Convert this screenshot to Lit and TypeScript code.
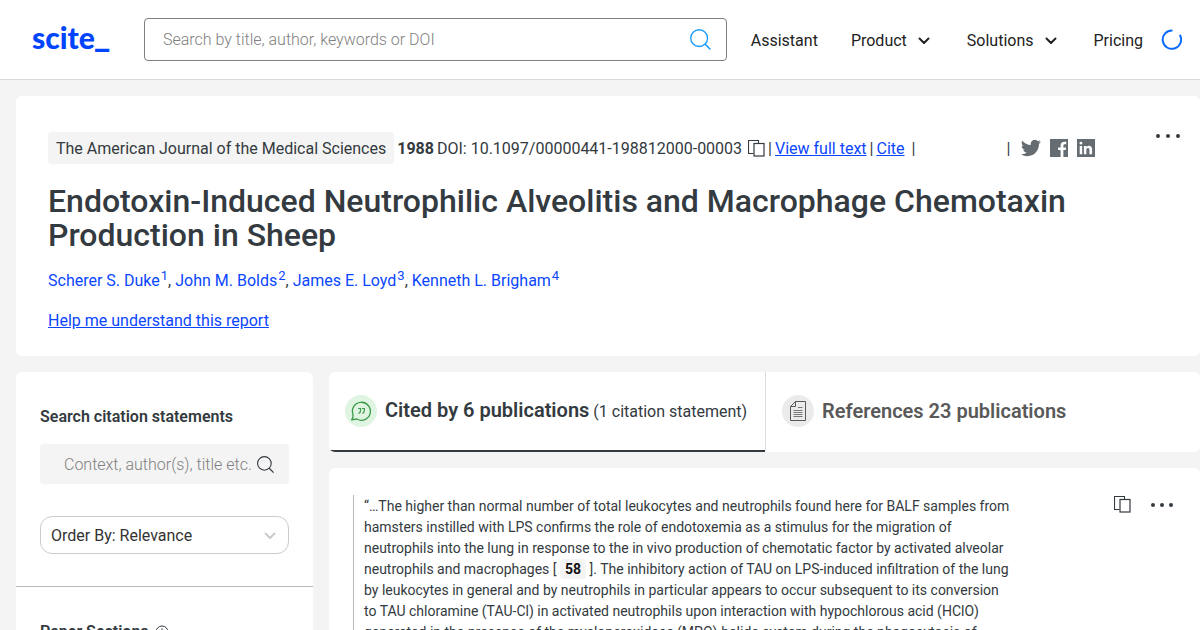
import { LitElement, html, css, svg } from "lit";
import { customElement } from "lit/decorators.js";

const chevron = html`<svg class="chevron" viewBox="0 0 14 10" width="14" height="10" aria-hidden="true">
  <path d="M2.500 2.500l4.500 4.500 4.500-4.500" fill="none" stroke="currentColor" stroke-width="2" stroke-linecap="round" stroke-linejoin="round" />
</svg>`;

const magnifier = html`<svg class="magnifier" viewBox="0 0 20 20" aria-hidden="true">
  <circle cx="8.7" cy="8.7" r="8" fill="none" stroke="currentColor" stroke-width="1.3" />
  <path d="M14.4 14.4l5.1 5.1" fill="none" stroke="currentColor" stroke-width="1.4" />
</svg>`;

const copyIcon = html`<svg viewBox="0 0 17 17" width="17" height="17" aria-hidden="true">
  <path d="M5.5 13.500h-5V.5h10v3" fill="none" stroke="currentColor" stroke-width="1.1" />
  <rect x="6" y="3.500" width="10" height="12.500" fill="none" stroke="currentColor" stroke-width="1.2" />
</svg>`;

const dots = (w: number, r: number) => html`<svg viewBox="0 0 ${w} 6" width=${w} height="6" fill="currentColor" aria-hidden="true">
  ${[r, w / 2, w - r].map((x) => svg`<circle cx=${x} cy="3" r=${r} />`)}
</svg>`;

const authors = [
  ["Scherer S. Duke", "1"],
  ["John M. Bolds", "2"],
  ["James E. Loyd", "3"],
  ["Kenneth L. Brigham", "4"],
];

@customElement("site-header")
export class SiteHeader extends LitElement {
  static styles = css`
    :host {
      display: block;
      background: #fff;
      border-bottom: 1px solid #d8d8d8;
    }
    .bar {
      display: flex;
      align-items: center;
      height: 79px;
      padding: 0 17px 0 32px;
      color: #222;
    }
    .logo {
      width: 112px;
      flex: none;
      margin-bottom: 4px;
      font: 900 30px/36px Lato, sans-serif;
      color: #0044ff;
      text-decoration: none;
    }
    .logo span {
      font: 700 32px/36px Roboto, sans-serif;
    }
    .search {
      position: relative;
      flex: 1;
      display: flex;
    }
    .search input {
      box-sizing: border-box;
      width: 100%;
      height: 43px;
      padding: 0 56px 0 18px;
      border: 1px solid #808080;
      border-radius: 4px;
      font: 300 16px Roboto, sans-serif;
      color: #222;
    }
    .search input::placeholder {
      color: #808080;
      opacity: 1;
    }
    .search button {
      position: absolute;
      right: 16px;
      top: 11px;
      padding: 0;
      border: 0;
      background: none;
      color: #1c9cff;
      display: flex;
    }
    .magnifier {
      width: 21px;
      height: 21px;
    }
    nav {
      display: flex;
      align-items: center;
      gap: 33px;
      margin: 2px 0 0 24px;
    }
    nav a,
    nav button {
      display: flex;
      align-items: center;
      gap: 10px;
      padding: 0;
      border: 0;
      background: none;
      font: 400 16px/20px Roboto, sans-serif;
      color: #222;
      text-decoration: none;
    }
    .chevron {
      margin-right: 3px;
    }
    .spinner {
      margin-left: 18px;
      flex: none;
    }
  `;

  render() {
    return html`<header class="bar">
      <a class="logo" href="#">scite<span>_</span></a>
      <form class="search" role="search">
        <input type="search" aria-label="Search papers" placeholder="Search by title, author, keywords or DOI" />
        <button type="button" aria-label="Search">${magnifier}</button>
      </form>
      <nav>
        <a href="#">Assistant</a>
        <button type="button">Product ${chevron}</button>
        <button type="button">Solutions ${chevron}</button>
        <a href="#">Pricing</a>
      </nav>
      <svg class="spinner" viewBox="0 0 22 22" width="22" height="22" aria-hidden="true">
        <path d="M12.8 1.6A9.2 9.2 0 1 0 19.4 7" fill="none" stroke="#0a6cff" stroke-width="2" transform="rotate(-8 11 11)" />
      </svg>
    </header>`;
  }
}

@customElement("paper-card")
export class PaperCard extends LitElement {
  static styles = css`
    :host {
      display: block;
      background: #fff;
      border-radius: 6px;
      padding: 36px 20px 25px 32px;
    }
    .top {
      display: flex;
      justify-content: space-between;
      align-items: flex-start;
    }
    .meta {
      display: flex;
      align-items: baseline;
      gap: 3px;
      height: 32px;
      white-space: nowrap;
    }
    .journal {
      padding: 7px 8px 5px;
      border-radius: 4px;
      background: #f4f4f4;
    }
    a {
      color: #0a46ff;
    }
    button {
      padding: 0;
      border: 0;
      background: none;
      color: #333a40;
      display: flex;
    }
    .copy {
      align-self: center;
      margin-left: 3px;
    }
    .social {
      display: flex;
      align-self: center;
      gap: 9px;
      margin-left: 8px;
    }
    .social a {
      color: #666d72;
      display: flex;
    }
    .badges {
      width: 85px;
    }
    .more {
      padding-top: 1px;
    }
    h1 {
      margin: 20px 0 0;
      max-width: 1060px;
      font-size: 32px;
      line-height: 34px;
      font-weight: 500;
    }
    .authors {
      margin: 19px 0 0;
      line-height: 20px;
    }
    .authors a {
      text-decoration: none;
    }
    sup {
      font-size: 13px;
      line-height: 0;
      padding-left: 1px;
    }
    .help {
      margin: 20px 0 0;
      line-height: 20px;
    }
  `;

  render() {
    return html`
      <div class="top">
        <div class="meta">
          <span class="journal">The American Journal of the Medical Sciences</span>
          <b>1988</b>
          <span>DOI: 10.1097/00000441-198812000-00003</span>
          <button class="copy" type="button" aria-label="Copy DOI">${copyIcon}</button>
          <span>|</span>
          <a href="#">View full text</a>
          <span>|</span>
          <a href="#">Cite</a>
          <span>&nbsp;|</span>
          <span class="badges"></span>
          <span>|</span>
          <span class="social">
            <a href="#" aria-label="Twitter"
              ><svg viewBox="0 0 24 24" width="20" height="20" fill="currentColor">
                <path d="M23.95 4.57a10 10 0 0 1-2.82.77 4.96 4.96 0 0 0 2.16-2.72c-.95.55-2 .95-3.13 1.18a4.92 4.92 0 0 0-8.38 4.48A13.94 13.94 0 0 1 1.64 3.16a4.92 4.92 0 0 0 1.52 6.57 4.9 4.9 0 0 1-2.23-.61v.06a4.92 4.92 0 0 0 3.95 4.83 5 5 0 0 1-2.21.08 4.94 4.94 0 0 0 4.6 3.42A9.87 9.87 0 0 1 0 19.54a14 14 0 0 0 7.55 2.21c9.05 0 14-7.5 14-13.98 0-.21 0-.42-.02-.63a9.94 9.94 0 0 0 2.42-2.57z" /></svg
            ></a>
            <a href="#" aria-label="Facebook"
              ><svg viewBox="0 0 18 18" width="18" height="20" fill="currentColor">
                <path d="M0 0h18v18h-4.600v-6.900h2.300l.4-2.700h-2.700V6.700c0-.8.400-1.400 1.500-1.400h1.300V2.800c-.3 0-1-.1-1.900-.1-2.200 0-3.700 1.300-3.700 3.700v2H8.100v2.700h2.500V18H0z" /></svg
            ></a>
            <a href="#" aria-label="LinkedIn"
              ><svg viewBox="0 0 18 18" width="18" height="20" fill="currentColor">
                <path fill-rule="evenodd" d="M0 0h18v18H0zM2.700 6.900v8.300h2.500V6.900zM3.950 2.700a1.450 1.450 0 1 0 0 2.900 1.450 1.450 0 0 0 0-2.900zM6.900 6.900v8.300h2.500v-4.400c0-1.200.5-1.900 1.500-1.900s1.500.7 1.500 1.900v4.400h2.700v-5c0-2.300-1.200-3.500-3-3.500-1.300 0-2.200.6-2.700 1.400V6.900z" /></svg
            ></a>
          </span>
        </div>
        <button class="more" type="button" aria-label="More options">${dots(24, 2)}</button>
      </div>
      <h1>Endotoxin-Induced Neutrophilic Alveolitis and Macrophage Chemotaxin Production in Sheep</h1>
      <p class="authors">
        ${authors.map(([name, n], i) => html`${i ? ", " : ""}<a href="#">${name}<sup>${n}</sup></a>`)}
      </p>
      <p class="help"><a href="#">Help me understand this report</a></p>
    `;
  }
}

@customElement("filter-panel")
export class FilterPanel extends LitElement {
  static styles = css`
    :host {
      display: block;
      background: #fff;
      border-radius: 6px;
    }
    .group {
      padding: 35px 24px 32px;
      border-bottom: 1px solid #b8b8b8;
    }
    .title {
      display: flex;
      align-items: center;
      gap: 6px;
      font-weight: 600;
      line-height: 20px;
    }
    .find {
      position: relative;
      margin: 17px 0 32px;
    }
    input,
    select {
      box-sizing: border-box;
      display: block;
      width: 100%;
      font: 400 16px Roboto, sans-serif;
      color: #333;
    }
    input {
      height: 40px;
      padding: 0 32px 0 24px;
      border: 0;
      border-radius: 4px;
      background: #f4f4f4;
      font-weight: 300;
    }
    input::placeholder {
      color: #808080;
      opacity: 1;
    }
    .magnifier {
      position: absolute;
      right: 15px;
      top: 12px;
      width: 17px;
      height: 17px;
    }
    .order {
      position: relative;
    }
    select {
      appearance: none;
      height: 38px;
      padding: 0 32px 0 10px;
      border: 1px solid #ccc;
      border-radius: 12px;
      background: #fff;
    }
    .chevron {
      position: absolute;
      right: 12px;
      top: 15px;
      color: #ccc;
    }
  `;

  render() {
    return html`
      <div class="group">
        <label class="title" for="statements">Search citation statements</label>
        <div class="find">
          <input id="statements" type="text" placeholder="Context, author(s), title etc." />
          ${magnifier}
        </div>
        <div class="order">
          <select aria-label="Order citation statements">
            <option>Order By: Relevance</option>
          </select>
          ${chevron}
        </div>
      </div>
      <div class="group">
        <div class="title">
          Paper Sections
          <svg viewBox="0 0 14 14" width="14" height="14" aria-hidden="true">
            <circle cx="7" cy="7" r="6" fill="none" stroke="currentColor" stroke-width="1" />
            <path d="M7 3.500v1.200M7 6v4.500" stroke="currentColor" stroke-width="1.300" />
          </svg>
        </div>
      </div>
    `;
  }
}

@customElement("citation-feed")
export class CitationFeed extends LitElement {
  static styles = css`
    :host {
      display: grid;
      align-content: start;
      gap: 16px;
      min-width: 0;
    }
    .tabs {
      display: flex;
      height: 80px;
      background: #fff;
      border-radius: 6px;
      overflow: hidden;
    }
    .tab {
      box-sizing: border-box;
      display: flex;
      align-items: center;
      gap: 8px;
      padding: 0 18px 0 16px;
      border: 0;
      border-bottom: 2px solid transparent;
      background: none;
      font: 400 16px/24px Roboto, sans-serif;
      color: #333a40;
      white-space: nowrap;
    }
    .tab strong {
      font-size: 20px;
      font-weight: 600;
    }
    .tab svg {
      flex: none;
    }
    .count {
      display: flex;
      align-items: baseline;
      gap: 4px;
    }
    .active {
      border-bottom-color: #333a40;
    }
    .other {
      flex: 1;
      border-left: 1px solid #ddd;
      color: #595959;
    }
    .card {
      display: flex;
      align-items: flex-start;
      padding: 27px 27px 27px 24px;
      background: #fff;
      border-radius: 6px;
    }
    blockquote {
      margin: 0 auto 0 0;
      padding: 1px 0 0 10px;
      border-left: 1px solid #b8b8b8;
      font-size: 14px;
      line-height: 21px;
      white-space: nowrap;
    }
    .ref {
      padding: 2px 5px;
      border-radius: 4px;
      background: #f4f4f4;
      color: #111;
      font-weight: 700;
    }
    .actions {
      display: flex;
      align-items: center;
      gap: 20px;
      padding-top: 1px;
    }
    .actions button {
      display: flex;
      padding: 0;
      border: 0;
      background: none;
      color: #333a40;
    }
  `;

  render() {
    return html`
      <div class="tabs" role="tablist">
        <button class="tab active" role="tab" aria-selected="true">
          <svg viewBox="0 0 32 32" width="32" height="32" aria-hidden="true">
            <circle cx="16" cy="16" r="16" fill="#dff5e1" />
            <path d="M8 19.500A9 9 0 1 1 11.800 24l-5.200.900c1-1 1.700-3 1.400-5.400z" fill="none" stroke="#3a9a48" stroke-width="1.300" stroke-linejoin="round" />
            <path d="M13.200 13.500h2.300v2.300c0 1.400-.6 2.200-1.900 2.700M17 13.500h2.300v2.300c0 1.400-.6 2.200-1.900 2.700" fill="none" stroke="#3a9a48" stroke-width="1.200" />
          </svg>
          <span class="count"><strong>Cited by 6 publications</strong><span>(1 citation statement)</span></span>
        </button>
        <button class="tab other" role="tab" aria-selected="false">
          <svg viewBox="0 0 32 32" width="32" height="32" aria-hidden="true">
            <circle cx="16" cy="16" r="16" fill="#ebebeb" />
            <path d="M13.500 6.500h10v19h-15v-14zM13.500 6.500v5h-5" fill="none" stroke="#595959" />
            <path d="M16 12.500h4.500M11.500 15.500h9M11.500 17.500h9M11.500 19.500h9M11.500 21.500h9" stroke="#777" />
          </svg>
          <strong>References 23 publications</strong>
        </button>
      </div>
      <article class="card">
        <blockquote>
          “…The higher than normal number of total leukocytes and neutrophils found here for BALF samples from<br />
          hamsters instilled with LPS confirms the role of endotoxemia as a stimulus for the migration of<br />
          neutrophils into the lung in response to the in vivo production of chemotatic factor by activated alveolar<br />
          neutrophils and macrophages [ <span class="ref">58</span> ]. The inhibitory action of TAU on LPS-induced infiltration of the lung<br />
          by leukocytes in general and by neutrophils in particular appears to occur subsequent to its conversion<br />
          to TAU chloramine (TAU-Cl) in activated neutrophils upon interaction with hypochlorous acid (HClO)<br />
          generated in the presence of the myeloperoxidase (MPO)-halide system during the phagocytosis of
        </blockquote>
        <div class="actions">
          <button type="button" aria-label="Copy statement">${copyIcon}</button>
          <button type="button" aria-label="More options">${dots(22, 2)}</button>
        </div>
      </article>
    `;
  }
}

@customElement("app-root")
export class AppRoot extends LitElement {
  static styles = css`
    :host {
      display: block;
      height: 100vh;
      overflow: hidden;
      background: #f4f4f4;
      color: #333a40;
      font: 400 16px/20px Roboto, sans-serif;
    }
    main {
      display: grid;
      grid-template-columns: 297px minmax(0, 1fr);
      gap: 16px;
      padding: 16px 0 0 16px;
    }
    .paper {
      grid-column: 1 / -1;
    }
  `;

  render() {
    return html`
      <site-header></site-header>
      <main>
        <paper-card class="paper"></paper-card>
        <filter-panel></filter-panel>
        <citation-feed></citation-feed>
      </main>
    `;
  }
}
